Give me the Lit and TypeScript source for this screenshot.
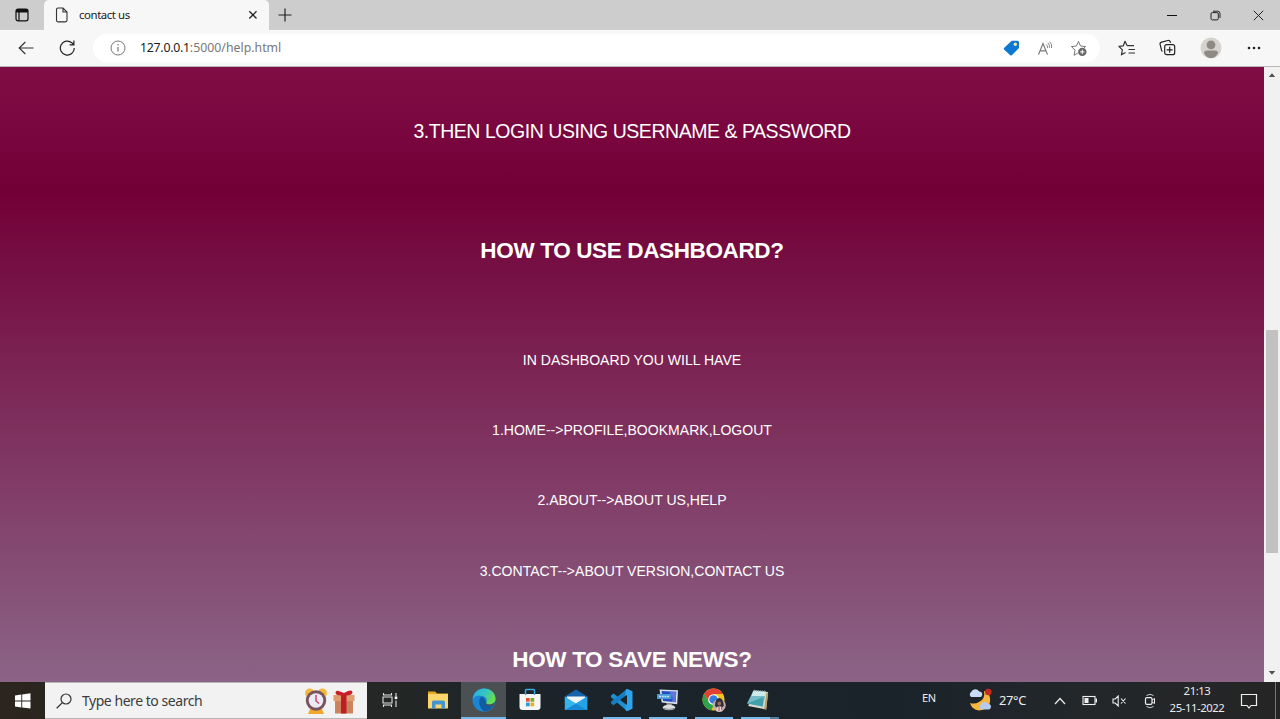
import { LitElement, html, css, svg } from "lit";
import { customElement } from "lit/decorators.js";

const pic = (w: number, h: number, body: unknown) =>
  html`<svg width=${w} height=${h} viewBox="0 0 ${w} ${h}" fill="none">${body}</svg>`;

@customElement("browser-chrome")
class BrowserChrome extends LitElement {
  static styles = css`
    :host { display: block; height: 67px; font-family: "Noto Sans", "Open Sans", sans-serif; color: #202020; }
    svg { display: block; flex: none; }
    .tabs { height: 30px; display: flex; align-items: center; background: #cdcdcd; }
    .workspace { width: 44px; display: flex; justify-content: center; }
    .tab { width: 225px; height: 30px; box-sizing: border-box; display: flex; align-items: center; background: #f7f7f7; border-radius: 5px 5px 0 0; padding: 0 11px 0 11px; }
    .title { flex: 1; margin-left: 10px; font-size: 11.4px; letter-spacing: -0.42px; line-height: 16px; white-space: nowrap; }
    .plus { margin-left: 9px; }
    .window { margin-left: auto; display: flex; align-items: center; padding-right: 16px; gap: 32px; }
    .bar { height: 36px; display: flex; align-items: center; background: #f7f7f7; border-bottom: 1px solid #bdb5ba; box-sizing: content-box; }
    .back { margin-left: 18px; }
    .reload { margin-left: 25px; }
    .address { margin-left: 17px; width: 1007px; height: 28px; box-sizing: border-box; border-radius: 14px; background: #fff; display: flex; align-items: center; padding: 0 12px 0 17px; }
    .url { flex: 1; margin-left: 14px; font-size: 12.3px; letter-spacing: 0.01px; line-height: 16px; color: #777; white-space: nowrap; }
    .host { color: #202020; letter-spacing: -0.25px; }
    .inner { display: flex; align-items: center; gap: 16px; }
    .inner svg:first-child { margin-right: 2px; }
    .outer { display: flex; align-items: center; gap: 22px; margin-left: 18px; }
  `;
  render() {
    return html`
      <div class="tabs">
        <div class="workspace">${pic(14, 14, svg`<rect x="1" y="1.2" width="12" height="11.6" rx="2" stroke="#111" stroke-width="1.2"/><path d="M1 4V3a2 2 0 0 1 2-2h8a2 2 0 0 1 2 2v1.4H4.6V13H3.4V4.4H1z" fill="#111"/>`)}</div>
        <div class="tab">
          ${pic(14, 16, svg`<path d="M3 1h5l4 4v8.3a1.6 1.6 0 0 1-1.6 1.6H3A1.6 1.6 0 0 1 1.5 13.3V2.600A1.600 1.600 0 0 1 3 1z M8 1v4h4" stroke="#333" stroke-width="1.100"/>`)}
          <span class="title">contact us</span>
          ${pic(10, 10, svg`<path d="M1.300 1.300l7.200 7.200M8.500 1.300L1.300 8.500" stroke="#222" stroke-width="1.300"/>`)}
        </div>
        <div class="plus">${pic(14, 14, svg`<path d="M7 .5v13M.5 7h13" stroke="#222" stroke-width="1.200"/>`)}</div>
        <div class="window">
          ${pic(12, 12, svg`<path d="M1 6.500h10" stroke="#111"/>`)}
          ${pic(11, 11, svg`<rect x="1" y="2.600" width="7.300" height="7.300" rx="1.400" stroke="#222"/><path d="M3 1.200h4.600a2.400 2.400 0 0 1 2.400 2.400V8" stroke="#222"/>`)}
          ${pic(11, 11, svg`<path d="M.8.8l9.400 9.400M10.200.8L.8 10.200" stroke="#222"/>`)}
        </div>
      </div>
      <div class="bar">
        <div class="back">${pic(16, 14, svg`<path d="M15.500 7H1.200M7.300 1L1.200 7l6.100 6" stroke="#333" stroke-width="1.150"/>`)}</div>
        <div class="reload">${pic(17, 16, svg`<path d="M15.300 8a7 7 0 1 1-2.500-5.300l1.300 1.300M14.900.5v4.300h-4.300" stroke="#222" stroke-width="1.200"/>`)}</div>
        <div class="address">
          ${pic(16, 16, svg`<circle cx="8" cy="8" r="7" stroke="#777"/><path d="M8 7v4.500" stroke="#777" stroke-width="1.200"/><circle cx="8" cy="4.800" r=".8" fill="#777"/>`)}
          <span class="url"><span class="host">127.0.0.1</span>:5000/help.html</span>
          <div class="inner">
            ${pic(17, 16, svg`<path d="M8.700 .7h5.700a1.600 1.600 0 0 1 1.600 1.600v5.700L9 15a1.400 1.400 0 0 1-2 0L1.300 9.800a1.400 1.400 0 0 1 0-2z" fill="#0c78d4"/><circle cx="12.300" cy="4.200" r="1.700" fill="#f1e5a0"/>`)}
            ${pic(16, 15, svg`<path d="M.5 13.600L5 2.500l4.500 11.100M2 9.800h6" stroke="#777" stroke-width="1.150"/><path d="M8.300 3.500q1.500 1.500 1.200 3.500M9.900 1.800q2.200 2.200 1.500 5M11.700.7q2.800 2.700 1.800 6.400" stroke="#777" stroke-width=".9"/>`)}
            ${pic(18, 17, svg`<path d="M8.500 1.500l2 4.500 5 .5-2 2M8.500 1.500L6.400 6l-5 .6 3.700 3.600L4 15.300l3.700-2.200" stroke="#777" stroke-linejoin="round"/><circle cx="12.300" cy="11.900" r="4.200" fill="#666"/><path d="M12.300 9.600v4.600M10 11.900h4.600" stroke="#fff"/>`)}
          </div>
        </div>
        <div class="outer">
          ${pic(18, 16, svg`<path d="M9 5.500L7 1.300 5.300 5.800.9 6.300l3.500 3.500-1 5L7.500 12.500M9 5.700h7M10.500 9.500H17M10.500 13H17" stroke="#333" stroke-width="1.200" stroke-linejoin="round"/>`)}
          ${pic(20, 18, svg`<rect x="6.700" y="5.700" width="10" height="10" rx="2" stroke="#222" stroke-width="1.200"/><path d="M11.700 7.800v6M8.700 10.800h6M4.500 12.400a2 2 0 0 1-1-1.200L2.100 5.400a2 2 0 0 1 1.500-2.300l6.300-1.600a2 2 0 0 1 2.300 1.200l.3 1.100" stroke="#222" stroke-width="1.200"/>`)}
          ${pic(22, 22, svg`<circle cx="11" cy="11" r="10.500" fill="#d6d3cf"/><circle cx="11" cy="7.900" r="4.400" fill="#8e8984"/><path d="M4 16q0-2.600 3-2.600h8q3 0 3 2.600-2 5-7 5t-7-5z" fill="#8e8984"/>`)}
          ${pic(22, 8, svg`<circle cx="5" cy="4" r="1.300" fill="#222"/><circle cx="10" cy="4" r="1.300" fill="#222"/><circle cx="15" cy="4" r="1.300" fill="#222"/>`)}
        </div>
      </div>`;
  }
}

@customElement("help-page")
class HelpPage extends LitElement {
  static styles = css`
    :host { display: flex; height: 615px; overflow: hidden; font-family: "Liberation Sans", Arial, sans-serif; color: #fff; }
    .content { flex: 1; display: flex; flex-direction: column; align-items: center; background: linear-gradient(#810d45 0, #720037 125px, #8b6486 615px); }
    p, h2 { margin: 0; white-space: nowrap; }
    .step { margin-top: 52px; font-size: 19.5px; letter-spacing: -0.46px; line-height: 24px; }
    h2 { margin-top: 94px; font-size: 22.5px; letter-spacing: -0.36px; line-height: 28px; }
    .list { display: flex; flex-direction: column; align-items: center; margin-top: 85px; gap: 50px; font-size: 14.06px; line-height: 20.2px; }
    .list + h2 { margin-top: 65px; }
    .scroll { width: 16px; display: flex; flex-direction: column; align-items: center; background: #f1f1f1; }
    .thumb { margin-top: 252px; margin-bottom: 117px; width: 12px; height: 223px; background: #c1c1c1; }
    .scroll svg { display: block; }
    .up { margin-top: 5px; }
  `;
  render() {
    return html`
      <div class="content">
        <p class="step">3.THEN LOGIN USING USERNAME &amp; PASSWORD</p>
        <h2>HOW TO USE DASHBOARD?</h2>
        <div class="list">
          <p>IN DASHBOARD YOU WILL HAVE</p>
          <p>1.HOME--&gt;PROFILE,BOOKMARK,LOGOUT</p>
          <p>2.ABOUT--&gt;ABOUT US,HELP</p>
          <p>3.CONTACT--&gt;ABOUT VERSION,CONTACT US</p>
        </div>
        <h2>HOW TO SAVE NEWS?</h2>
      </div>
      <div class="scroll">
        <div class="up">${pic(8, 6, svg`<path d="M.8 5L4 1.300 7.200 5z" fill="#505050"/>`)}</div>
        <div class="thumb"></div>
        ${pic(8, 6, svg`<path d="M.8 1h6.400L4 4.700z" fill="#505050"/>`)}
      </div>`;
  }
}

const apps = [
  { id: "files", state: "", icon: pic(22, 20, svg`<path d="M1 1.500h7l2 2h11V18H1z" fill="#e8a81f"/><path d="M1 4h20v14.500H1z" fill="#fbd66c"/><path d="M5 18.500v-6.500a1.500 1.500 0 0 1 1.500-1.500h10A1.500 1.500 0 0 1 18 12v6.500h-3.500V14.500h-6v4z" fill="#4496d2"/>`) },
  { id: "edge", state: "active", icon: pic(24, 24, svg`<defs><linearGradient id="a" x1="0" y1="0" x2="1" y2=".5"><stop offset="0" stop-color="#2aa9e8"/><stop offset=".55" stop-color="#35c5c0"/><stop offset="1" stop-color="#66df4d"/></linearGradient></defs><circle cx="12" cy="12" r="11.500" fill="#1b86d6"/><path d="M7.300 13.500C7 10.500 8.500 9 10.800 8.300L14.400 14c-.8 1.300-.2 2.800 3 3 2.300.1 3.500-.6 4.600-.3-2 4-6 6.600-10 6.400-4-3-5-6.500-4.700-9.600z" fill="#135ca2"/><path d="M.7 11.200C1.200 5 6 .5 12 .5c7 0 11.500 5 11.500 9.900 0 4-3 6-6.300 6-3 0-3.600-1.300-2.800-2.400.8-1.200.9-5-3.600-5.700C6.500 6.700 2.500 7.800.7 11.200z" fill="url(#a)"/><path d="M14.400 14c-.8 1.100-.2 2.400 2.800 2.400 2.300 0 4.400-.9 5.500-2.500l-.4 3.300c-3 1.300-6.800 1-8.700-.9-.8-1-.2-2.300.8-2.300z" fill="#4b5153"/>`) },
  { id: "store", state: "", icon: pic(24, 24, svg`<path d="M1.500 6h21v13a3 3 0 0 1-3 3h-15a3 3 0 0 1-3-3z" fill="#f6f6f6"/><path d="M7.500 7V2.500a1 1 0 0 1 1-1h7a1 1 0 0 1 1 1V7" stroke="#38a9e4" stroke-width="1.500"/><path d="M8 10h3.700v3.700H8z" fill="#e75335"/><path d="M12.500 10h3.700v3.700h-3.700z" fill="#78ad2b"/><path d="M8 14.600h3.700v3.700H8z" fill="#249ddb"/><path d="M12.500 14.600h3.700v3.700h-3.700z" fill="#edae17"/>`) },
  { id: "mail", state: "", icon: pic(24, 22, svg`<path d="M.8 7.500L12 .5l11.200 7v6H.8z" fill="#1464ad"/><path d="M3 7.500h18v6l-9 3-9-3z" fill="#f2f5f8"/><path d="M.8 7.500L12 14.500l11.200-7V21H.8z" fill="#36b5ec"/><path d="M.8 21L12 14.500 23.200 21z" fill="#168ad7"/><path d="M12 14.500l11.200-7V21z" fill="#25a2e3"/>`) },
  { id: "code", state: "running", icon: pic(24, 24, svg`<path d="M1 7.600l2.500-2L17 16v7L1 9.200z" fill="#1d8fd3"/><path d="M1 15.200l2.500 2L17 7V1L1 13.800z" fill="#167fc4"/><path d="M17 .8l5.500 2.500v17.400L17 23.200l-1.500-1.200V2z" fill="#2ea4ed"/><path d="M17 7v10L10 12z" fill="#1c2428"/>`) },
  { id: "remote", state: "running", icon: pic(24, 24, svg`<path d="M3.500 1.500L22 2.200l-.8 14-15.500-1.600z" fill="#dbe0ec"/><path d="M5.500 3L20.300 3.700l-.7 10.500L7 13z" fill="#244ec3"/><path d="M13 3.500l7.300.2-.7 10.500-4-.4q3-4-2.600-10.300z" fill="#5f78d5"/><path d="M1 6h14.500v5H1z" fill="#4b9ad6"/><path d="M3 8.500h10" stroke="#c9e4f6" stroke-width="1.600" stroke-dasharray="2 .7"/><path d="M10.500 15l5.500.5-.5 3h-5z" fill="#999"/><ellipse cx="13" cy="19.500" rx="6.200" ry="2.800" fill="#dddddf"/><path d="M8 20.500q5 2 10 0" stroke="#888"/>`) },
  { id: "chrome", state: "running", icon: pic(24, 24, svg`<circle cx="11.500" cy="11.500" r="11" fill="#f1c522"/><path d="M2 6A11 11 0 0 1 21 6H11.500L7 14z" fill="#e34133"/><path d="M2 6l5.200 8.500 4.500 2.300L9.500 22.300A11 11 0 0 1 2 6z" fill="#2ba24c"/><circle cx="11.500" cy="11.500" r="5.300" fill="#fff"/><circle cx="11.500" cy="11.500" r="4.200" fill="#347de0"/><circle cx="17.300" cy="17.300" r="6.400" fill="#c6aaa8"/><path d="M13 18q.4-8 4.200-8 4 0 4.600 8l-2 1.500h-5z" fill="#302d35"/><circle cx="17.300" cy="15.500" r="1.900" fill="#936d65"/><path d="M14 23l1.500-4.500h4L21 23q-4 1.500-7 0z" fill="#e4d5d5"/><path d="M17 19v4M19.500 19l.5 3.500" stroke="#a4494b"/>`) },
  { id: "notes", state: "split", icon: pic(24, 24, svg`<path d="M8 3.500l14 .5-1.800 17.500-18-3.500z" fill="#d9dbd2"/><path d="M20.500 4.500l1.700.5-2 16.500-2-.5z" fill="#b99e62"/><path d="M7.500 2.600L20 3.500l-3.200 15L1 15.500z" fill="#77bdc9"/><path d="M7.500 2.600L20 3.500l-1 4.500L5.500 8z" fill="#cdebeb"/><path d="M1 15.500L17.500 9l-.7 9.500z" fill="#429fac"/><path d="M8 2.500L19.800 3.400" stroke="#8c9c9d" stroke-width="1.500" stroke-dasharray="1 1"/>`) },
];

@customElement("task-bar")
class TaskBar extends LitElement {
  static styles = css`
    :host { display: flex; height: 37px; font-family: "Noto Sans", "Open Sans", sans-serif; color: #ececec; background: linear-gradient(90deg, #2c241f 0, #29251f 45px, #242725 380px, #1b242a 560px, #1a232a 900px, #23272a 1080px, #252525 1280px); }
    svg { display: block; flex: none; }
    .start { width: 45px; display: flex; align-items: center; justify-content: center; }
    .search { width: 322px; height: 37px; box-sizing: border-box; display: flex; align-items: center; background: #f2f2f2; border: solid #b9b5b5; border-width: 1px 0; padding: 0 12px 0 11px; }
    .hint { flex: 1; margin-left: 10px; font-size: 14px; letter-spacing: -0.46px; color: #3c3c3c; white-space: nowrap; }
    .gifts { display: flex; gap: 5px; align-items: center; }
    .view { width: 46px; margin-right: 2px; display: flex; align-items: center; justify-content: center; }
    .view svg { margin-bottom: 2px; }
    .apps { display: flex; gap: 1px; }
    .app { width: 45px; display: grid; grid-template-rows: 35px 2px; justify-items: center; align-items: center; }
    .app svg { margin: 1px 0 0 0; }
    .active { background: #4b5153; }
    .line { width: 38px; height: 2px; background: transparent; }
    .running .line { background: #76b9ed; }
    .active .line { width: 45px; background: #76b9ed; }
    .split .line { background: linear-gradient(90deg, #76b9ed 29px, #4e7da2 29px); }
    .split svg { margin-right: 4px; }
    .tray { margin-left: auto; display: flex; align-items: center; }
    .lang { font-size: 11px; width: 16px; margin-right: 30px; letter-spacing: -0.3px; padding-bottom: 6px; }
    .lang + svg { margin-bottom: 2px; }
    .temp { font-size: 12.8px; letter-spacing: -0.3px; width: 29px; margin: 0 25px 0 7px; padding-bottom: 2px; white-space: nowrap; }
    .status { display: flex; align-items: center; gap: 14px; }
    .status svg:first-child { margin-right: 1px; }
    .clock { width: 60px; margin: 0 13px 0 9px; padding-bottom: 3px; font-size: 11.3px; line-height: 17px; text-align: center; letter-spacing: -0.42px; white-space: nowrap; }
    .peek { width: 1px; height: 37px; background: #777; margin: 0 4px 0 17px; }
  `;
  render() {
    return html`
      <div class="start">${pic(16, 16, svg`<path d="M0 2.400l6.300-.9v6H0zM7.200 1.400L15.500.3v7.200H7.200zM0 8.400h6.300v6L0 13.500zM7.200 8.400h8.300v7.200l-8.300-1.200z" fill="#fff"/>`)}</div>
      <div class="search">
        ${pic(16, 16, svg`<circle cx="10" cy="6" r="5" stroke="#333" stroke-width="1.200"/><path d="M6.400 9.600L.7 15.300" stroke="#333" stroke-width="1.300"/>`)}
        <span class="hint">Type here to search</span>
        <div class="gifts">
          ${pic(24, 28, svg`<path d="M1 7Q1 1.500 6 1.500q3 0 4 3L4 9Q1 9 1 7zM23 7q0-5.500-5-5.500-3 0-4 3L20 9q3 0 3-2z" fill="#f4b740"/><path d="M6 22h12l2 5H4z" fill="#f1a82c"/><circle cx="12" cy="13.500" r="10.200" fill="#78545b"/><circle cx="12" cy="13.500" r="7.300" fill="#eceaf6"/><path d="M12 8v6l3 2.500" stroke="#d0485a" stroke-width="1.500"/>`)}
          ${pic(22, 26, svg`<path d="M2 12h18v13.500H2z" fill="#cd835e"/><path d="M.5 7h21v6H.5z" fill="#df9d70"/><path d="M8 7h5.500v18.500H8z" fill="#bf1c25"/><path d="M11 7.500Q2 8 2.500 4.500 3 1.500 7 3.500l4 1.500 4-2q4.500-1.500 4.500 1.500Q19 8 11 7.500z" fill="#c91d27"/>`)}
        </div>
      </div>
      <div class="view">${pic(18, 16, svg`<path d="M2.500 1v2h8V1M2.500 15v-2h8v2M2 5h9v6H2zM15 1v3.500M15 8.500V15" stroke="#e2e2e2" stroke-width="1.100"/><path d="M13.700 4.500h2.600v2.600h-2.600z" fill="#fff"/>`)}</div>
      <div class="apps">${apps.map((a) => html`<div class="app ${a.state} ${a.state === "split" ? "running" : ""}">${a.icon}<div class="line"></div></div>`)}</div>
      <div class="tray">
        <span class="lang">EN</span>
        ${pic(24, 24, svg`<path d="M16 3q1.500 8-5 11-4 2.500-9 1 2 7 9 7.500 7-.3 10.500-6.500 2-7-2.500-12z" fill="#f7b63d"/><circle cx="20.300" cy="4" r="3.300" fill="#c42b1c"/><path d="M3 9a3 3 0 0 1 .2-5 4.500 4.500 0 0 1 8-.5q3.800.5 2.800 4-.4 1.500-2 1.500z" fill="#c9dbf7"/><path d="M13 21.500a2.900 2.900 0 0 1 0-5 3.800 3.800 0 0 1 6.700-1q3.600.5 3.300 3.500-.5 2.500-2.500 2.500z" fill="#b6ccef"/>`)}
        <span class="temp">27°C</span>
        <div class="status">
          ${pic(14, 10, svg`<path d="M2 8l5-5.500L12 8" stroke="#eee" stroke-width="1.200"/>`)}
          ${pic(16, 11, svg`<rect x="1" y="1.500" width="12" height="8" stroke="#eee" stroke-width="1.100"/><path d="M2.500 3h4v5h-4zM13.500 3.500H15v4h-1.500z" fill="#eee"/>`)}
          ${pic(16, 12, svg`<path d="M1 4h2.200l3-3v10l-3-3H1zM9 3.500l4.500 5M13.500 3.500L9 8.500" stroke="#eee" stroke-width="1.100"/>`)}
          ${pic(16, 16, svg`<path d="M4.500 2.500q3.500-2.500 7 0M4.500 13.500q3.500 2.500 7 0" stroke="#ccc"/><rect x="3.500" y="4.700" width="6.500" height="6.600" rx="1.300" stroke="#eee" stroke-width="1.200"/><path d="M10 7l2.500-1.500v5L10 9" stroke="#eee"/>`)}
        </div>
        <div class="clock">21:13<br />25-11-2022</div>
        ${pic(18, 18, svg`<path d="M1.500 2.500h15v11H11L9 16l-2-2.500H1.500z" stroke="#eee" stroke-width="1.200"/>`)}
        <div class="peek"></div>
      </div>`;
  }
}

@customElement("app-root")
class AppRoot extends LitElement {
  static styles = css`
    :host { display: block; width: 1280px; height: 719px; overflow: hidden; }
  `;
  render() {
    return html`<browser-chrome></browser-chrome><help-page></help-page><task-bar></task-bar>`;
  }
}
